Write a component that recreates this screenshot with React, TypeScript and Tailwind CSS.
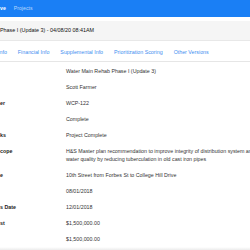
import React from "react";

const rows: { label: string; value: string[] }[] = [
  { label: "", value: ["Water Main Rehab Phase I (Update 3)"] },
  { label: "", value: ["Scott Farmer"] },
  { label: "er", value: ["WCP-122"] },
  { label: "", value: ["Complete"] },
  { label: "ks", value: ["Project Complete"] },
  {
    label: "cope",
    value: [
      "H&S Master plan recommendation to improve integrity of distribution system and",
      "water quality by reducing tuberculation in old cast iron pipes",
    ],
  },
  { label: "e", value: ["10th Street from Forbes St to College Hill Drive"] },
  { label: "", value: ["08/01/2018"] },
  { label: "s Date", value: ["12/01/2018"] },
  { label: "st", value: ["$1,500,000.00"] },
  { label: "", value: ["$1,500,000.00"] },
];

export default function App() {
  return (
    <div
      className="w-[250px] h-[250px] overflow-hidden bg-white flex flex-col"
      style={{ fontFamily: '"Liberation Sans", Arial, sans-serif' }}
    >
      <div className="h-[17px] shrink-0 bg-[#1a7ff5] flex items-center gap-[8px] text-[5.2px]">
        <span className="text-white font-bold whitespace-nowrap">ve</span>
        <span className="text-[#b9d8fd] whitespace-nowrap">Projects</span>
      </div>
      <div className="h-[4px] shrink-0 bg-white" />
      <div className="h-[20px] shrink-0 bg-[#f5f5f5] border-b border-[#e8e8e8] flex items-center text-[5.4px] text-[#111] whitespace-nowrap">
        Phase I (Update 3) - 04/08/20 08:41AM
      </div>
      <div className="h-[21px] shrink-0 border-b border-[#e6e6e6] flex items-end pb-[4px] gap-[11px] text-[5.3px] text-[#3d8ef0] whitespace-nowrap">
        <span className="-ml-[2px]">Info</span>
        <span>Financial Info</span>
        <span>Supplemental Info</span>
        <span>Prioritization Scoring</span>
        <span>Other Versions</span>
      </div>
      <div className="flex flex-col pt-[1px] text-[5.3px] leading-[8px] text-[#333]">
        {rows.map((r, i) => (
          <div key={i} className="grid grid-cols-[66px_1fr] py-[4px]">
            <div className="font-bold text-[#222] whitespace-nowrap">{r.label}</div>
            <div className="flex flex-col whitespace-nowrap">
              {r.value.map((v, j) => (
                <span key={j}>{v}</span>
              ))}
            </div>
          </div>
        ))}
      </div>
      <div className="flex-1 bg-gradient-to-b from-white to-[#ececec]" />
    </div>
  );
}
